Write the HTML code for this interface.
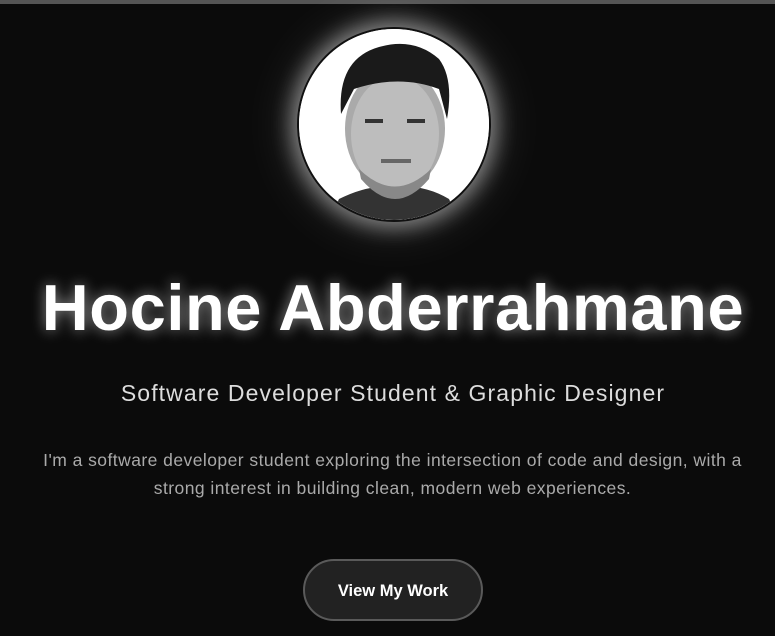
<!DOCTYPE html>
<html><head><style>
html,body{margin:0;padding:0;background:#0b0b0b;width:775px;height:636px;overflow:hidden;font-family:"Liberation Sans",sans-serif}
.bar{position:absolute;left:0;top:0;width:775px;height:4px;background:#555}
.av{position:absolute;left:297px;top:27px;width:190px;height:191px;border-radius:50%;border:2px solid #111;box-shadow:0 0 20px 6px rgba(255,255,255,.45),0 0 50px 10px rgba(255,255,255,.12);overflow:hidden;background:#fff}
h1{position:absolute;left:0;width:786px;top:270px;margin:0;text-align:center;color:#fff;font-size:65px;font-weight:bold;text-shadow:0 0 14px rgba(255,255,255,.55);letter-spacing:.6px}
.sub{position:absolute;left:0;width:786px;top:380px;text-align:center;color:#ddd;font-size:23px;letter-spacing:1.1px}
.p{position:absolute;left:30px;width:725px;top:446px;text-align:center;color:#aaa;font-size:17.5px;line-height:28px;letter-spacing:.45px}
.btn{position:absolute;left:303px;top:559px;width:176px;height:58px;border:2px solid #5a5a5a;border-radius:31px;background:#222;color:#fff;font-weight:bold;font-size:16.5px;text-align:center;line-height:60px}
</style></head><body>
<div class="bar"></div>
<div class="av"><svg width="190" height="191" viewBox="0 0 190 191">
<rect width="190" height="191" fill="#fff"/>
<path d="M30 191 L40 170 Q70 155 95 158 Q125 155 150 170 L160 191Z" fill="#333"/>
<ellipse cx="96" cy="100" rx="50" ry="62" fill="#aaa"/>
<ellipse cx="96" cy="105" rx="44" ry="58" fill="#bdbdbd"/>
<path d="M42 85 Q38 30 80 18 Q115 8 140 30 Q155 50 148 90 L140 60 Q100 45 55 60Z" fill="#1a1a1a"/>
<rect x="66" y="90" width="18" height="4" fill="#333"/><rect x="108" y="90" width="18" height="4" fill="#333"/>
<rect x="82" y="130" width="30" height="4" fill="#666"/>
<path d="M60 140 Q96 175 132 140 L130 150 Q96 190 62 150Z" fill="#888"/>
</svg></div>
<h1>Hocine Abderrahmane</h1>
<div class="sub">Software Developer Student &amp; Graphic Designer</div>
<div class="p">I'm a software developer student exploring the intersection of code and design, with a strong interest in building clean, modern web experiences.</div>
<div class="btn">View My Work</div>
</body></html>
